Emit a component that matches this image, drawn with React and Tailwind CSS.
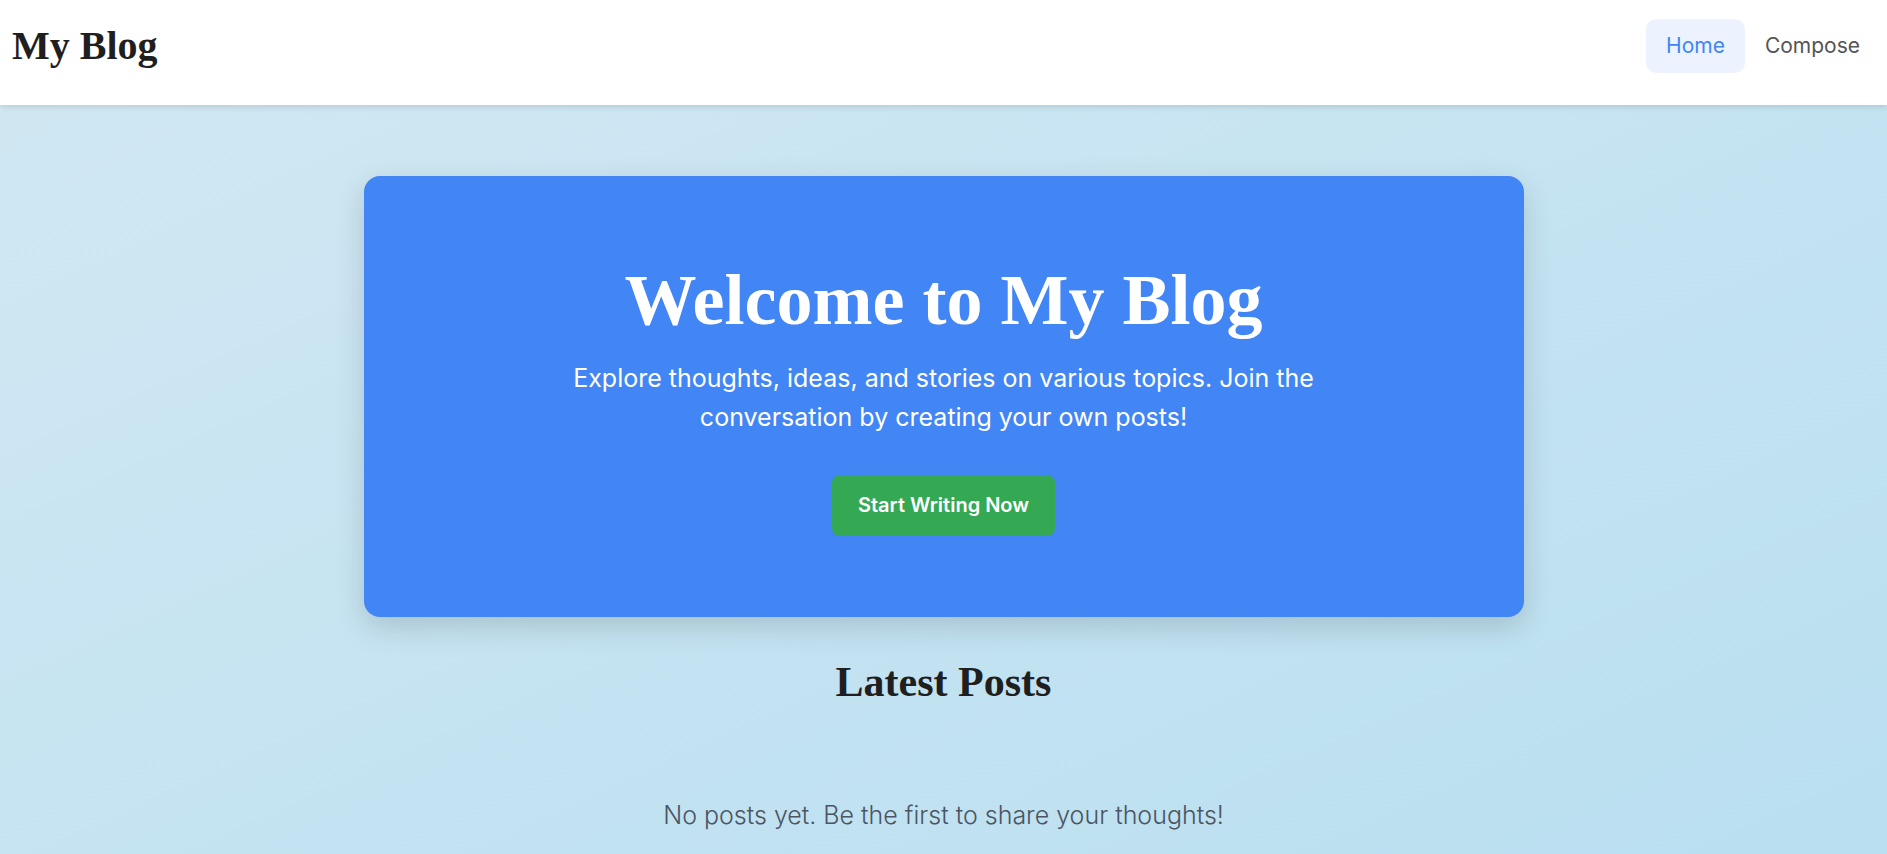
export default function App() {
  const serif = { fontFamily: '"Liberation Serif", "Times New Roman", serif' };
  return (
    <div
      className="min-h-screen bg-gradient-to-br from-[#d2e8f3] to-[#b9dff0]"
      style={{ fontFamily: 'Inter, "Noto Sans", sans-serif' }}
    >
      <header className="relative z-10 flex h-[105px] items-center justify-between bg-white pb-[13px] pl-[12px] pr-[7px] shadow-[0_2px_6px_rgba(0,0,0,0.12)]">
        <div
          className="text-[40px] font-bold leading-none text-[#1f1f1f]"
          style={serif}
        >
          My Blog
        </div>
        <nav className="flex items-center">
          <a className="rounded-[10px] bg-[#edf3fe] px-[20px] py-[12px] text-[21px] leading-[30px] text-[#4285f4]">
            Home
          </a>
          <a className="rounded-[10px] px-[20px] py-[12px] text-[21px] leading-[30px] text-[#555555]">
            Compose
          </a>
        </nav>
      </header>

      <main className="mx-auto max-w-[1200px] px-[20px] pt-[71px]">
        <section className="flex flex-col items-center rounded-[16px] bg-[#4285f4] px-[40px] pb-[81px] pt-[81px] text-center text-white shadow-[0_10px_30px_rgba(0,0,0,0.15)]">
          <h1 className="text-[72px] font-bold leading-[1.2]" style={serif}>
            Welcome to My Blog
          </h1>
          <p className="mt-[16px] max-w-[800px] text-[25px] leading-[38.5px]">
            Explore thoughts, ideas, and stories on various topics. Join the conversation by creating your own posts!
          </p>
          <button className="mt-[39px] rounded-[8px] bg-[#34a853] px-[26px] py-[17px] text-[20px] font-semibold leading-[27px] text-white">
            Start Writing Now
          </button>
        </section>

        <h2
          className="mt-[40px] text-center text-[42px] font-bold leading-[1.2] text-[#1f1f1f]"
          style={serif}
        >
          Latest Posts
        </h2>

        <div className="pt-[90px] text-center text-[25px] font-light leading-[34px] text-[#4b5563]">
          No posts yet. Be the first to share your thoughts!
        </div>
      </main>
    </div>
  );
}
